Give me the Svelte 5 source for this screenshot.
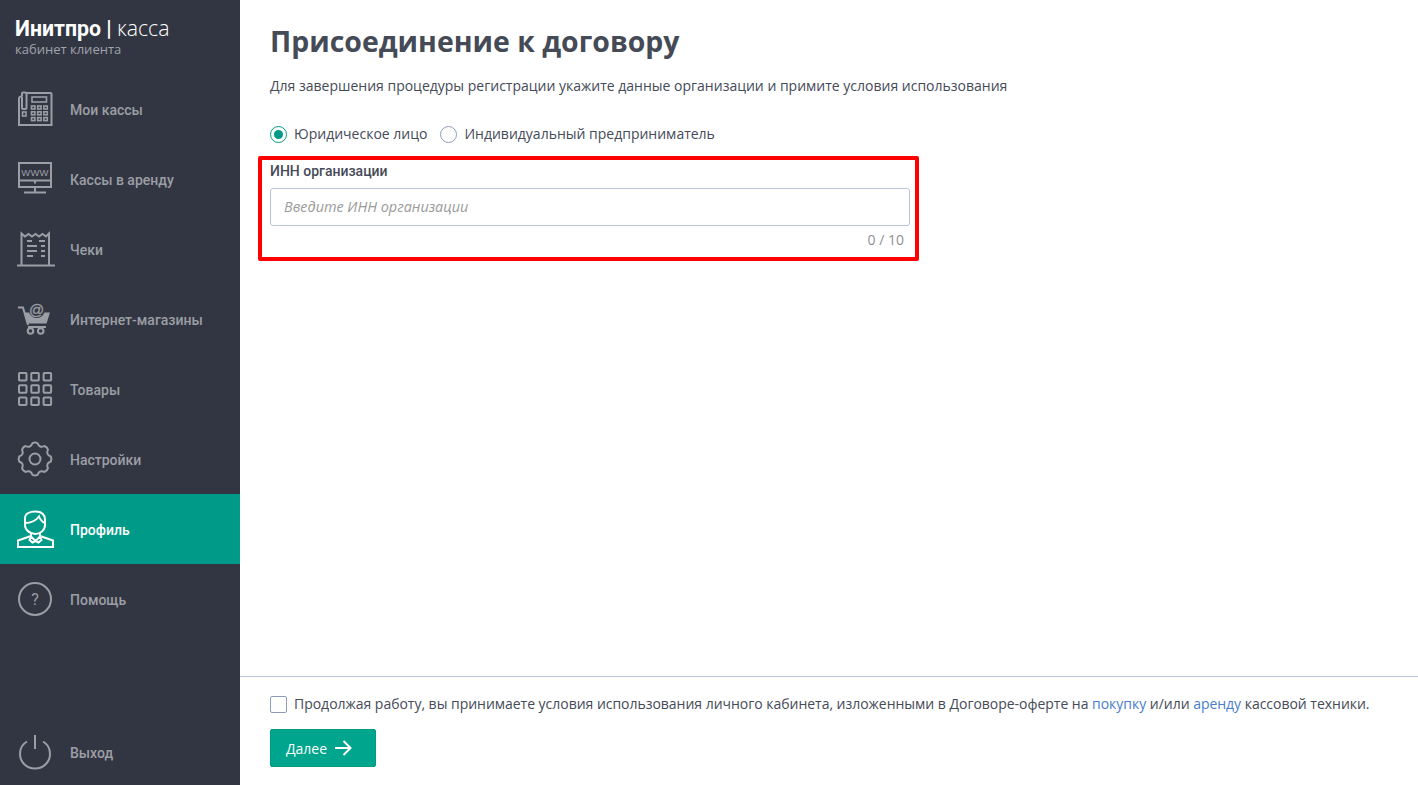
<script>
    const navItems = [
        { label: "Мои кассы", icon: "phone" },
        { label: "Кассы в аренду", icon: "www" },
        { label: "Чеки", icon: "receipt" },
        { label: "Интернет-магазины", icon: "cart" },
        { label: "Товары", icon: "grid" },
        { label: "Настройки", icon: "gear" },
        { label: "Профиль", icon: "user", active: true },
        { label: "Помощь", icon: "help" },
    ];

    const gridCells = [0, 12.3, 24.6];

    // gear outline: 8 teeth around the centre of the 34px box
    function polar(deg, r) {
        const t = (deg * Math.PI) / 180;
        return `${(17 + r * Math.sin(t)).toFixed(2)} ${(17 - r * Math.cos(t)).toFixed(2)}`;
    }
    const gearPath =
        [0, 45, 90, 135, 180, 225, 270, 315]
            .map((a, i) => {
                const start = polar(a - 9, 16);
                const end = polar(a + 9, 16);
                const valley = polar(a + 22.5, 11.5);
                const next = polar(a + 36, 16);
                return `${i === 0 ? "M" : "L"}${start} Q${polar(a, 17)} ${end} Q${valley} ${next}`;
            })
            .join(" ") + "Z";
</script>

{#snippet icon(name)}
    <svg class="icon" viewBox="0 0 34 34" fill="none" stroke="currentColor" stroke-width="2">
        {#if name === "phone"}
            <path d="M8 1H32.500a1 1 0 0 1 1 1V33H1V6.500a2 2 0 0 1 2-2H4" />
            <path d="M4 4.500V16a1 1 0 0 0 1 1H7.500a1 1 0 0 0 1-1V1.500a1 1 0 0 0-1-1H5a1 1 0 0 0-1 1V4" />
            <rect x="14" y="5" width="14.500" height="5" stroke-width="1.600" />
            <rect x="4.500" y="20" width="3.500" height="4" stroke-width="1.600" />
            {#each [0, 1, 2] as r}
                {#each [0, 1, 2] as c}
                    <rect x={13.500 + c * 6.200} y={14 + r * 5.800} width="3.400" height="3" stroke-width="1.600" />
                {/each}
            {/each}
        {:else if name === "www"}
            <rect x="1" y="1" width="32" height="24" />
            <path d="M1 18.500H33M17 25V30M6 30.500H28M17 19.500V21.500" />
            <text x="17" y="13.500" class="www">WWW</text>
        {:else if name === "receipt"}
            <path d="M3.500 33V1.500L7 4.500L10.500 2L14 4.500L17.500 2L21 4.500L24.500 2L28 4.500L31 1.500V33" />
            <path d="M-1 33.500H37" />
            <path d="M9 9H14M21 9H27M9 14H19M23 14H27M9 19H19M23 19H27M9 24H15M23 24H27" />
        {:else if name === "cart"}
            <path d="M0 5.500H5L10 23" />
            <path d="M6.500 10.500H32L28.500 21.500H9.500Z" fill="currentColor" stroke="none" />
            <path d="M10 25H28" />
            <circle cx="18.700" cy="8" r="8" fill="#323642" stroke="none" />
            <text x="18.700" y="13" class="at">@</text>
            <circle cx="12.500" cy="29" r="2.800" />
            <circle cx="22.700" cy="29" r="2.800" />
        {:else if name === "grid"}
            {#each gridCells as y}
                {#each gridCells as x}
                    <rect x={x + 1} y={y + 1} width="7.500" height="7.500" rx="0.800" />
                {/each}
            {/each}
        {:else if name === "gear"}
            <path d={gearPath} stroke-linejoin="round" />
            <circle cx="17" cy="17" r="5.500" />
        {:else if name === "user"}
            <path d="M7 6C7 2 11 -0.500 17.500 -0.500C24 -0.500 27 3 27 8V13C27 18 22.500 22 17.500 22C12 22 7 18 7 13Z" />
            <path d="M7 11C13 11 18 8.500 21 4.500C22 7.500 24.500 10 27 11" />
            <path d="M13 21V24L0 28.500V35H35V28.500L22 24V21" />
            <path d="M13 24.500L17.500 29L22 24.500M13 24.500L11.500 28L14.500 30.500L17.500 29L20.500 30.500L23.500 28L22 24.500" />
        {:else if name === "help"}
            <circle cx="17" cy="17" r="16" />
            <text x="17" y="22.500" class="qm">?</text>
        {:else if name === "power"}
            <path d="M17 0V14" />
            <path d="M9 6.500C4.500 9 2 13 2 19C2 27 8.500 33.500 17 33.500C25.500 33.500 32 27 32 19C32 13 29.500 9 25 6.500" />
        {/if}
    </svg>
{/snippet}

<div class="layout">
    <aside class="sidebar">
        <div class="logo">
            <div class="logo-title"><b>Инитпро |</b> <span>касса</span></div>
            <div class="logo-sub">кабинет клиента</div>
        </div>
        <nav>
            {#each navItems as item}
                <div class="nav-item" class:active={item.active}>
                    {@render icon(item.icon)}
                    <span>{item.label}</span>
                </div>
            {/each}
        </nav>
        <div class="nav-item logout">
            {@render icon("power")}
            <span>Выход</span>
        </div>
    </aside>

    <main class="content">
        <div class="form-area">
            <h1>Присоединение к договору</h1>
            <p class="intro">Для завершения процедуры регистрации укажите данные организации и примите условия использования</p>

            <div class="radios">
                <div class="radio">
                    <span class="radio-mark checked"></span>
                    Юридическое лицо
                </div>
                <div class="radio">
                    <span class="radio-mark"></span>
                    Индивидуальный предприниматель
                </div>
            </div>

            <div class="field">
                <div class="field-label">ИНН организации</div>
                <input type="text" placeholder="Введите ИНН организации" />
                <div class="counter">0 / 10</div>
            </div>
        </div>

        <footer>
            <div class="agree">
                <span class="checkbox"></span>
                <span>Продолжая работу, вы принимаете условия использования личного кабинета, изложенными в Договоре-оферте на <a href="#buy">покупку</a> и/или <a href="#rent">аренду</a> кассовой техники.</span>
            </div>
            <button type="button" class="next">
                Далее
                <svg width="17" height="16" viewBox="0 0 17 16" fill="none" stroke="#fff" stroke-width="2">
                    <path d="M0 8H15M8.500 1L15.500 8L8.500 15" />
                </svg>
            </button>
        </footer>
    </main>
</div>

<style>
    :global(body) {
        margin: 0;
        background: #fff;
    }

    .layout {
        display: flex;
        height: 785px;
        overflow: hidden;
        font-family: "Open Sans", "Noto Sans", sans-serif;
        color: #454a57;
    }

    .sidebar {
        width: 240px;
        flex-shrink: 0;
        display: flex;
        flex-direction: column;
        background: #323642;
        font-family: Roboto, sans-serif;
    }

    .logo {
        height: 74px;
        box-sizing: border-box;
        padding: 14px 0 0 15px;
    }

    .logo-title {
        height: 27px;
        font-family: Roboto, sans-serif;
        font-size: 21.300px;
        line-height: 27px;
        color: #fff;
    }

    .logo-title span {
        font-family: "Open Sans", sans-serif;
        font-weight: 300;
    }

    .logo-sub {
        font-family: "Open Sans", sans-serif;
        font-size: 13px;
        line-height: 16px;
        color: #a0a3ab;
    }

    .nav-item {
        display: flex;
        align-items: center;
        height: 70px;
        padding-left: 18px;
        color: #9c9ea5;
        font-size: 14px;
        font-weight: 500;
    }

    .nav-item span {
        padding-top: 2px;
    }

    .nav-item.active {
        background: #009b88;
        color: #fff;
    }

    .logout {
        margin-top: auto;
        height: 66px;
    }

    .icon {
        width: 34px;
        height: 34px;
        margin-right: 18px;
        flex-shrink: 0;
        overflow: visible;
    }

    .www {
        font: 400 9.500px "Liberation Sans", sans-serif;
        letter-spacing: 0.200px;
        text-anchor: middle;
        fill: currentColor;
        stroke: none;
    }

    .at {
        font: 400 15px "Liberation Sans", sans-serif;
        text-anchor: middle;
        fill: currentColor;
        stroke: currentColor;
        stroke-width: 0.300;
    }

    .qm {
        font: 400 16px Roboto, sans-serif;
        text-anchor: middle;
        fill: currentColor;
        stroke: none;
    }

    .content {
        flex: 1;
        display: flex;
        flex-direction: column;
        min-width: 0;
    }

    .form-area {
        flex: 1;
        padding: 0 30px;
    }

    h1 {
        margin: 20px 0 0;
        font-size: 28.440px;
        line-height: 42px;
        font-weight: 700;
        color: #454a57;
    }

    .intro {
        margin: 14px 0 0;
        font-size: 14px;
        line-height: 20px;
        color: #454a57;
    }

    .radios {
        display: flex;
        gap: 13px;
        margin-top: 28px;
        font-size: 14px;
        line-height: 20px;
    }

    .radio {
        display: flex;
        align-items: center;
        gap: 7px;
    }

    .radio-mark {
        width: 15px;
        height: 15px;
        border: 1px solid #8e9bbb;
        border-radius: 50%;
        background: #fff;
        display: flex;
        align-items: center;
        justify-content: center;
    }

    .radio-mark.checked {
        border-color: #009b88;
    }

    .radio-mark.checked::after {
        content: "";
        width: 9px;
        height: 9px;
        border-radius: 50%;
        background: #009b88;
    }

    .field {
        width: 640px;
        margin: 12px 0 0 -12px;
        padding: 2px 5px 0 8px;
        height: 95px;
        border: 4px solid #fe0000;
        border-radius: 2px;
    }

    .field-label {
        font-family: Roboto, sans-serif;
        font-size: 14px;
        line-height: 18px;
        font-weight: 500;
    }

    input {
        display: block;
        box-sizing: border-box;
        width: 640px;
        height: 38px;
        margin-top: 8px;
        padding: 0 13px 2px;
        border: 1px solid #b9c6df;
        border-radius: 3px;
        font: 14.400px "Open Sans", sans-serif;
        outline: none;
    }

    input::placeholder {
        font-style: italic;
        color: #9a9a9a;
        opacity: 1;
    }

    .counter {
        margin-top: 5px;
        padding-right: 6px;
        text-align: right;
        font-size: 14px;
        line-height: 18px;
        color: #8d8f96;
    }

    footer {
        height: 109px;
        box-sizing: border-box;
        padding: 17px 30px 0;
        border-top: 1px solid #b9c6df;
    }

    .agree {
        display: flex;
        align-items: center;
        gap: 7px;
        font-size: 14px;
        line-height: 20px;
        letter-spacing: -0.025px;
        white-space: nowrap;
    }

    .checkbox {
        width: 15px;
        height: 15px;
        border: 1px solid #8e9bbb;
        border-radius: 2px;
    }

    a {
        color: #4a7dc9;
        text-decoration: none;
    }

    .next {
        display: flex;
        align-items: center;
        gap: 8px;
        width: 106px;
        height: 38px;
        margin-top: 15px;
        padding: 0 0 0 15px;
        border: 1px solid #009b88;
        border-radius: 2px;
        background: #00a58d;
        color: #fff;
        font: 14px "Open Sans", sans-serif;
    }
</style>
